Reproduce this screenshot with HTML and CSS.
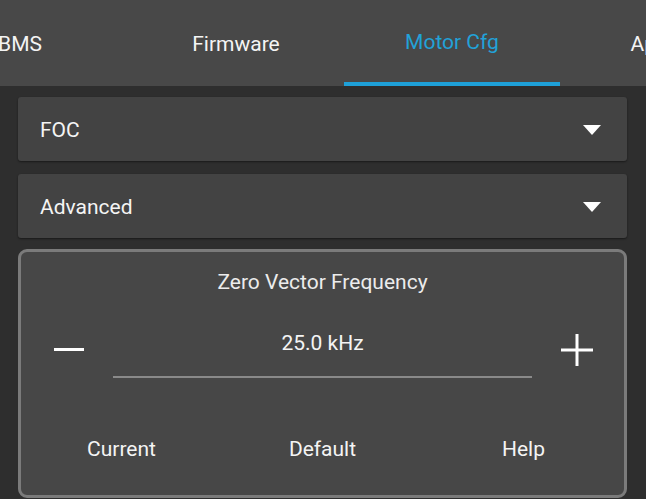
FILE: index.html
```html
<!DOCTYPE html>
<html lang="en">
  <head>
    <meta charset="UTF-8" />
    <meta name="viewport" content="width=device-width, initial-scale=1.0" />
    <title>Motor Cfg</title>
    <link rel="stylesheet" href="styles.css">
  </head>
  <body>
    <div class="tabbar">
      <div class="tabs">
        <div class="tab">BMS</div>
        <div class="tab">Firmware</div>
        <div class="tab active">Motor Cfg</div>
        <div class="tab">App Cfg</div>
      </div>
    </div>

    <div class="content">
      <div class="combo">
        <span>FOC</span>
        <svg class="arrow" width="18" height="10" viewBox="0 0 18 10">
          <polygon points="0,0 18,0 9,10" fill="#ffffff" />
        </svg>
      </div>
      <div class="combo">
        <span>Advanced</span>
        <svg class="arrow" width="18" height="10" viewBox="0 0 18 10">
          <polygon points="0,0 18,0 9,10" fill="#ffffff" />
        </svg>
      </div>

      <div class="param">
        <div class="param-title">Zero Vector Frequency</div>
        <div class="stepper">
          <button class="step minus">
            <svg width="30" height="4" viewBox="0 0 30 4">
              <rect x="0" y="0" width="30" height="3" fill="#ffffff" />
            </svg>
          </button>
          <div class="field">25.0 kHz</div>
          <button class="step plus">
            <svg width="32" height="32" viewBox="0 0 32 32">
              <rect x="0" y="14.5" width="32" height="3" fill="#ffffff" />
              <rect x="14.5" y="0" width="3" height="32" fill="#ffffff" />
            </svg>
          </button>
        </div>
        <div class="actions">
          <button class="action">Current</button>
          <button class="action">Default</button>
          <button class="action">Help</button>
        </div>
      </div>
    </div>
  </body>
</html>
```

FILE: styles.css
```css
html,
body {
  margin: 0;
  height: 100%;
}

body {
  background: #2e2e2e;
  color: #f4f4f4;
  font-family: Roboto, "Liberation Sans", sans-serif;
  font-size: 21px;
  overflow: hidden;
}

.tabbar {
  background: #484848;
  height: 86px;
  overflow: hidden;
}

.tabs {
  display: flex;
  margin-left: -88px;
  height: 86px;
}

.tab {
  flex: 0 0 216px;
  box-sizing: border-box;
  display: flex;
  align-items: center;
  justify-content: center;
  padding: 2px 0 0;
  white-space: nowrap;
}

.tab.active {
  color: #22a2d8;
  border-bottom: 4px solid #1ea0d8;
  padding-bottom: 0;
}

.content {
  padding: 11px 19px 0 18px;
  display: flex;
  flex-direction: column;
  gap: 13px;
}

.combo {
  height: 64px;
  background: #434343;
  border-radius: 3px;
  box-shadow: 0 1px 2px rgba(0, 0, 0, 0.45);
  display: flex;
  align-items: center;
  justify-content: space-between;
  padding: 2px 26px 0 22px;
  box-sizing: border-box;
}

.arrow {
  display: block;
  margin-top: 0;
}

.param {
  margin-top: -2px;
  height: 249px;
  box-sizing: border-box;
  border: 3px solid #7b7b7b;
  border-radius: 9px;
  background: #474747;
  padding: 18px 0 22px;
}

.param-title {
  text-align: center;
  line-height: 24px;
  color: #ececec;
}

.stepper {
  margin-top: 19px;
  display: flex;
  align-items: center;
}

.step {
  flex: 0 0 92px;
  height: 65px;
  background: none;
  border: none;
  padding: 9px 0 0;
  display: flex;
  align-items: center;
  justify-content: center;
}

.minus {
  padding-left: 3px;
}

.plus {
  padding-right: 3px;
}

.step svg {
  display: block;
}

.field {
  flex: 1;
  text-align: center;
  line-height: 24px;
  padding: 18px 0 21px;
  border-bottom: 2px solid #8a8a8a;
}

.actions {
  margin-top: 47px;
  display: grid;
  grid-template-columns: 1fr 1fr 1fr;
}

.action {
  height: 48px;
  background: none;
  border: none;
  color: #f4f4f4;
  font-family: Roboto, "Liberation Sans", sans-serif;
  font-size: 21px;
}
```
